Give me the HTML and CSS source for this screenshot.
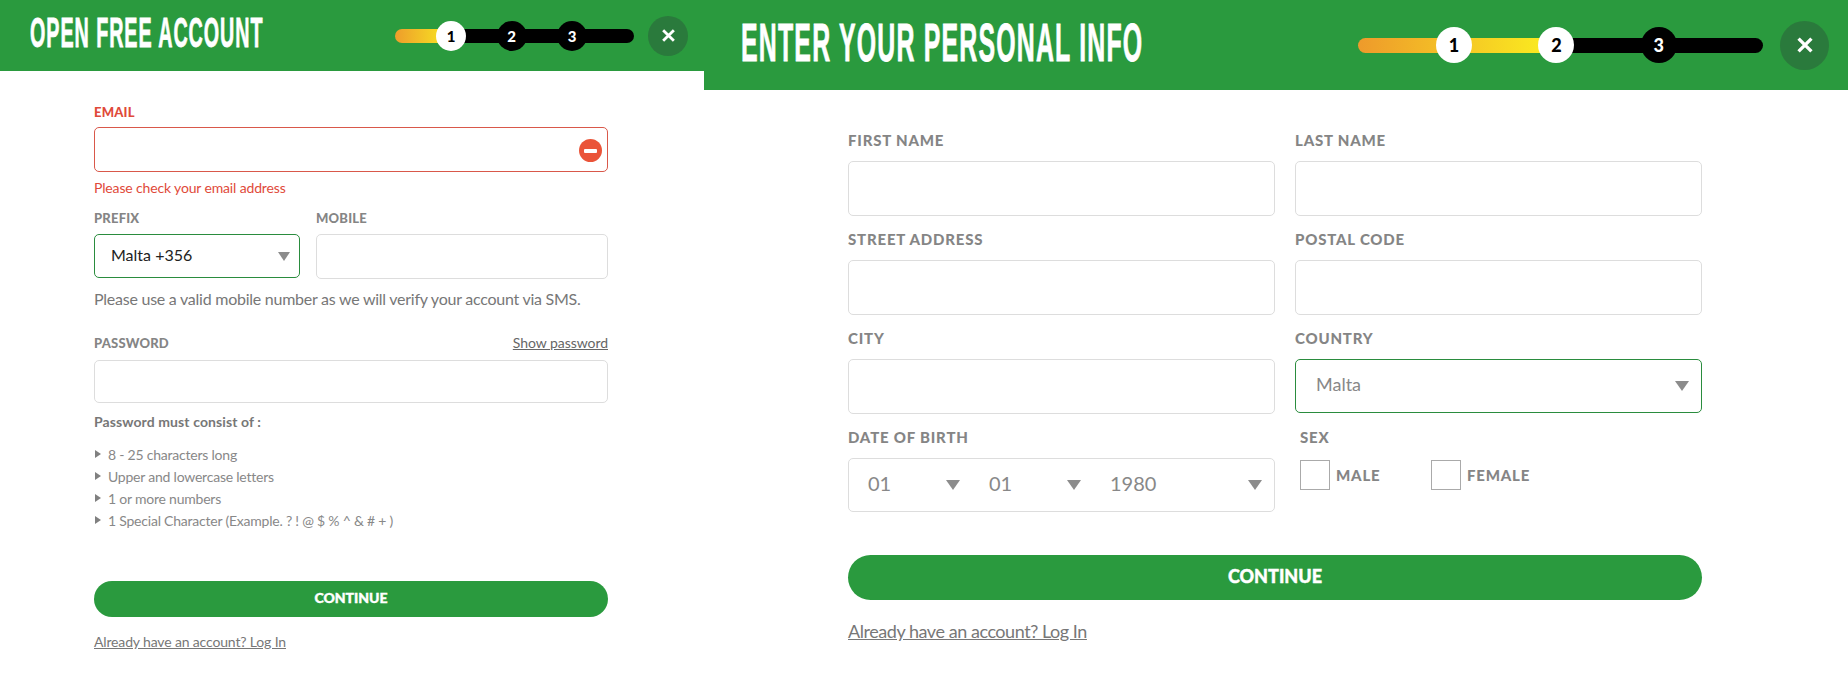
FILE: index.html
```html
<!DOCTYPE html>
<html lang="en">
<head>
  <meta charset="UTF-8">
  <title>Open free account</title>
  <link rel="stylesheet" href="styles.css">
</head>
<body>
  <div class="page">

    <!-- step 1 -->
    <section class="panel panel-small">
      <header class="head">
        <h1 class="head-title"><span>OPEN FREE ACCOUNT</span></h1>
        <div class="steps">
          <span class="step on">1</span>
          <span class="step">2</span>
          <span class="step">3</span>
        </div>
        <button class="close" type="button">
          <svg viewBox="0 0 14 14"><path d="M2 2l10 10M12 2L2 12"/></svg>
        </button>
      </header>

      <form class="form">
        <label class="label label-error label-email">EMAIL</label>
        <div class="input-wrap">
          <input class="input input-error" type="text">
          <span class="error-icon"><span></span></span>
        </div>
        <p class="error-text">Please check your email address</p>

        <div class="phone-row">
          <div>
            <label class="label">PREFIX</label>
            <div class="select select-green"><span class="val">Malta +356</span><span class="arrow"></span></div>
          </div>
          <div>
            <label class="label">MOBILE</label>
            <input class="input" type="text">
          </div>
        </div>
        <p class="help">Please use a valid mobile number as we will verify your account via SMS.</p>

        <div class="pass-head">
          <label class="label">PASSWORD</label>
          <a class="show-pass" href="#">Show password</a>
        </div>
        <input class="input input-pass" type="password">
        <p class="rules-title">Password must consist of :</p>
        <ul class="rules">
          <li>8 - 25 characters long</li>
          <li>Upper and lowercase letters</li>
          <li>1 or more numbers</li>
          <li>1 Special Character (Example. ? ! @ $ % ^ &amp; # + )</li>
        </ul>

        <button class="continue" type="button">CONTINUE</button>
        <a class="login" href="#">Already have an account? Log In</a>
      </form>
    </section>

    <!-- step 2 -->
    <section class="panel panel-big">
      <header class="head">
        <h1 class="head-title"><span>ENTER YOUR PERSONAL INFO</span></h1>
        <div class="steps">
          <span class="step on">1</span>
          <span class="step on">2</span>
          <span class="step">3</span>
        </div>
        <button class="close" type="button">
          <svg viewBox="0 0 14 14"><path d="M2 2l10 10M12 2L2 12"/></svg>
        </button>
      </header>

      <form class="form">
        <div class="info-grid">
          <div>
            <label class="label">FIRST NAME</label>
            <input class="input" type="text">
          </div>
          <div>
            <label class="label">LAST NAME</label>
            <input class="input" type="text">
          </div>
          <div>
            <label class="label">STREET ADDRESS</label>
            <input class="input" type="text">
          </div>
          <div>
            <label class="label">POSTAL CODE</label>
            <input class="input" type="text">
          </div>
          <div>
            <label class="label">CITY</label>
            <input class="input" type="text">
          </div>
          <div>
            <label class="label">COUNTRY</label>
            <div class="select select-green"><span class="val">Malta</span><span class="arrow"></span></div>
          </div>
          <div>
            <label class="label">DATE OF BIRTH</label>
            <div class="dob">
              <div class="dob-part"><span class="val">01</span><span class="arrow"></span></div>
              <div class="dob-part"><span class="val">01</span><span class="arrow"></span></div>
              <div class="dob-part"><span class="val">1980</span><span class="arrow"></span></div>
            </div>
          </div>
          <div class="sex">
            <label class="label">SEX</label>
            <div class="sex-options">
              <div class="sex-option"><span class="box"></span>MALE</div>
              <div class="sex-option"><span class="box"></span>FEMALE</div>
            </div>
          </div>
        </div>

        <button class="continue" type="button">CONTINUE</button>
        <a class="login" href="#">Already have an account? Log In</a>
      </form>
    </section>

  </div>
</body>
</html>
```

FILE: styles.css
```css
* {
  box-sizing: border-box;
}

body {
  margin: 0;
  background-color: #fff;
  font-family: "Lato", sans-serif;
  color: #777;
}

.page {
  display: flex;
  align-items: flex-start;
  width: 1848px;
  height: 681px;
  overflow: hidden;
}

.panel-small {
  width: 704px;
}

.panel-big {
  width: 1144px;
}

/* header */
.head {
  display: flex;
  align-items: center;
  background-color: #2a9a3e;
}

.panel-small .head {
  height: 71px;
  padding: 0 16px 0 30px;
}

.panel-big .head {
  height: 90px;
  padding: 0 19px 0 37px;
}

.head-title {
  flex: 1;
  min-width: 0;
  margin: 0;
  font-family: "Liberation Sans", sans-serif;
  font-weight: 700;
  color: #fff;
  white-space: nowrap;
  -webkit-text-stroke: 0.8px #fff;
}

.head-title span {
  display: inline-block;
  transform-origin: left center;
}

.panel-small .head-title {
  padding-bottom: 6px;
  font-size: 42px;
  letter-spacing: 2px;
}

.panel-small .head-title span {
  transform: scaleX(0.47);
}

.panel-big .head-title {
  padding-bottom: 5px;
  font-size: 53px;
  letter-spacing: 2.5px;
}

.panel-big .head-title span {
  transform: scaleX(0.47);
}

/* progress */
.steps {
  position: relative;
  display: flex;
  flex-shrink: 0;
  align-items: center;
}

.steps::before {
  content: "";
  position: absolute;
  left: 0;
  right: 0;
  border-radius: 8px;
}

.panel-small .steps {
  width: 239px;
  padding-left: 41px;
  gap: 30.5px;
  margin-right: 14px;
}

.panel-small .steps::before {
  height: 14px;
  background: linear-gradient(90deg, #ee9d2b 0, #f8ea22 56px, #000 56px);
}

.panel-big .steps {
  width: 405px;
  padding-left: 78px;
  gap: 66.4px;
  margin-right: 17px;
}

.panel-big .steps::before {
  height: 15px;
  background: linear-gradient(90deg, #ee9a2b 0, #fbf01f 199px, #000 199px);
}

.step {
  position: relative;
  display: flex;
  align-items: center;
  justify-content: center;
  border-radius: 50%;
  background-color: #000;
  color: #fff;
  font-weight: 900;
}

.step.on {
  background-color: #fff;
  color: #000;
}

.panel-small .step {
  width: 30px;
  height: 30px;
  font-size: 15px;
}

.panel-big .step {
  width: 36px;
  height: 36px;
  font-size: 18px;
}

.close {
  display: flex;
  flex-shrink: 0;
  align-items: center;
  justify-content: center;
  padding: 0;
  border: 0;
  border-radius: 50%;
  background-color: #2a7a3c;
}

.close svg {
  fill: none;
  stroke: #fff;
  stroke-width: 2.6;
}

.panel-small .close {
  width: 40px;
  height: 40px;
}

.panel-small .close svg {
  width: 15px;
  height: 15px;
}

.panel-big .close {
  width: 49px;
  height: 49px;
}

.panel-big .close svg {
  width: 18px;
  height: 18px;
}

/* form bits */
.label {
  display: block;
  font-weight: 900;
  color: #858585;
}

.input {
  display: block;
  width: 100%;
  border: 1px solid #ddd;
  border-radius: 5px;
  background-color: #fff;
  outline: 0;
}

.select {
  display: flex;
  align-items: center;
  justify-content: space-between;
  border: 1px solid #2a8c3e;
  border-radius: 5px;
}

.val {
  margin-bottom: 4px;
}

.arrow {
  display: block;
  width: 0;
  height: 0;
  border-style: solid;
  border-color: #8c8c8c transparent transparent;
}

.continue {
  display: block;
  width: 100%;
  padding: 0 0 4px;
  border: 0;
  background-color: #2a9a3e;
  color: #fff;
  font-family: "Lato", sans-serif;
  font-weight: 900;
  -webkit-text-stroke: 0.4px #fff;
}

.login {
  display: block;
  color: #777;
}

/* left panel */
.panel-small .form {
  width: 514px;
  margin-left: 94px;
  padding-top: 34px;
}

.panel-small .label {
  height: 14px;
  margin-bottom: 8px;
  font-size: 13px;
  line-height: 14px;
  letter-spacing: 0.2px;
}

.panel-small .input {
  height: 45px;
}

.panel-small .label-error {
  color: #df4a3a;
}

.input-wrap {
  position: relative;
}

.input-error {
  border-color: #d9584a;
}

.error-icon {
  position: absolute;
  top: 12px;
  right: 6px;
  display: flex;
  align-items: center;
  justify-content: center;
  width: 23px;
  height: 23px;
  border-radius: 50%;
  background-color: #ea5439;
}

.error-icon span {
  width: 13px;
  height: 4px;
  border-radius: 1px;
  background-color: #fff;
}

.error-text {
  margin: 7px 0 0;
  font-size: 14px;
  line-height: 18px;
  letter-spacing: -0.15px;
  color: #df4a3a;
}

.phone-row {
  display: grid;
  grid-template-columns: 206px 292px;
  gap: 16px;
  align-items: start;
  margin-top: 14px;
}

.phone-row .label {
  margin-bottom: 9px;
}

.panel-small .select {
  height: 44px;
  padding: 0 9px 0 16px;
  font-size: 16px;
  color: #222;
}

.panel-small .arrow {
  border-width: 9px 6px 0;
}

.help {
  margin: 10px 0 0;
  font-size: 16px;
  line-height: 20px;
  letter-spacing: -0.25px;
  white-space: nowrap;
}

.pass-head {
  display: flex;
  justify-content: space-between;
  margin-top: 27px;
}

.pass-head .label {
  margin-bottom: 10px;
}

.show-pass {
  font-size: 14px;
  line-height: 14px;
  letter-spacing: -0.05px;
  color: #666;
}

.panel-small .input-pass {
  height: 43px;
}

.rules-title {
  margin: 10px 0 0;
  font-size: 14px;
  line-height: 18px;
  font-weight: 700;
  letter-spacing: 0.1px;
}

.rules {
  margin: 12px 0 0;
  padding: 0;
  list-style: none;
}

.rules li {
  display: flex;
  align-items: center;
  height: 22px;
  font-size: 14px;
  letter-spacing: -0.22px;
  color: #888;
}

.rules li::before {
  content: "";
  width: 0;
  height: 0;
  margin: 0 7px 0 1px;
  border-style: solid;
  border-width: 4.5px 0 4.5px 6px;
  border-color: transparent transparent transparent #808080;
}

.panel-small .continue {
  height: 36px;
  margin-top: 50px;
  border-radius: 18px;
  font-size: 14px;
}

.panel-small .login {
  margin-top: 15px;
  font-size: 14px;
  line-height: 20px;
  letter-spacing: -0.15px;
}

/* right panel */
.panel-big .form {
  width: 854px;
  margin-left: 144px;
  padding-top: 43px;
}

.info-grid {
  display: grid;
  grid-template-columns: 427px 407px;
  column-gap: 20px;
  row-gap: 16px;
}

.panel-big .label {
  height: 16px;
  margin-bottom: 12px;
  font-size: 15px;
  line-height: 14px;
  letter-spacing: 0.8px;
}

.panel-big .input {
  height: 55px;
}

.panel-big .select {
  height: 54px;
  padding: 0 12px 0 20px;
  font-size: 18px;
  color: #888;
}

.panel-big .arrow {
  border-width: 10px 7px 0;
}

.dob {
  display: grid;
  grid-template-columns: 121px 121px 1fr;
  height: 54px;
  border: 1px solid #ddd;
  border-radius: 5px;
}

.dob-part {
  display: flex;
  align-items: center;
  justify-content: space-between;
  padding: 0 10px 0 19px;
  font-size: 20px;
  color: #888;
}

.dob-part:last-child {
  padding-right: 12px;
}

.sex .label {
  padding-left: 5px;
}

.sex-options {
  display: flex;
  margin-top: 14px;
  padding-left: 5px;
}

.sex-option {
  display: flex;
  align-items: center;
  width: 131px;
  font-size: 15px;
  font-weight: 900;
  letter-spacing: 0.8px;
  color: #858585;
}

.box {
  width: 30px;
  height: 30px;
  margin-right: 6px;
  border: 1px solid #aaa;
}

.panel-big .continue {
  height: 45px;
  margin-top: 43px;
  border-radius: 23px;
  font-size: 18px;
}

.panel-big .login {
  margin-top: 19px;
  font-size: 18px;
  line-height: 24px;
  letter-spacing: -0.45px;
}
```
